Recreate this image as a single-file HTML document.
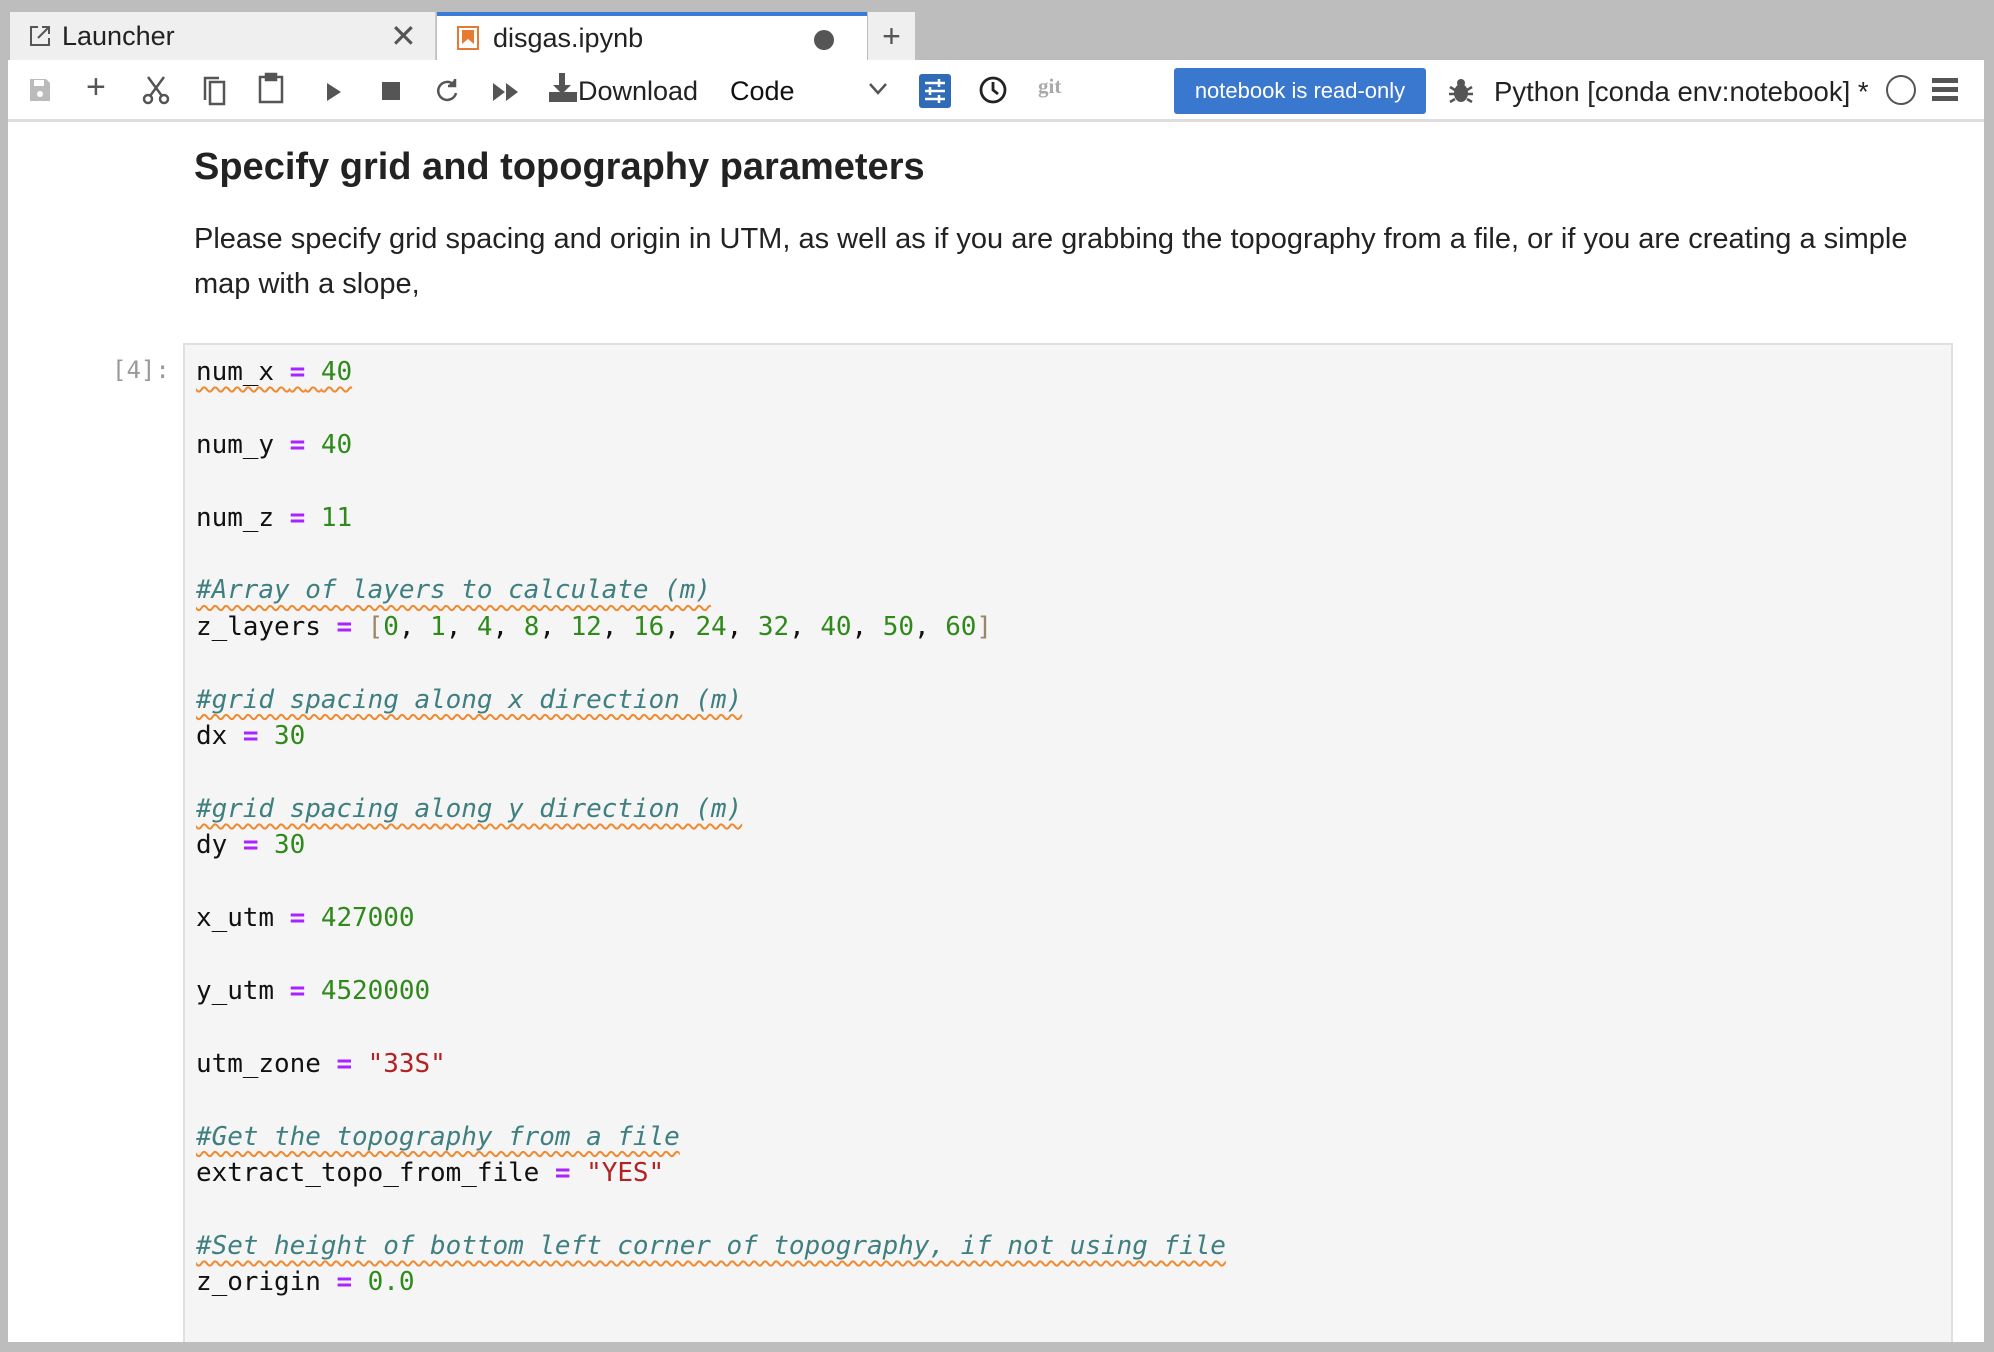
<!DOCTYPE html>
<html style="width:1994px;height:1352px;overflow:hidden"><head><meta charset="utf-8"><style>
*{margin:0;padding:0;box-sizing:border-box}
body{width:1994px;height:1352px;background:#bdbdbd;position:relative;overflow:hidden;font-family:"Liberation Sans",sans-serif;color:#222}
.tab{position:absolute;top:12px;height:48px;font-size:27px;display:flex;align-items:center}
#t1{left:10px;width:426px;background:#efefef;border-right:1px solid #ccc}
#t2{left:437px;width:430px;background:#fff;border-top:4px solid #3a7bd5}
#t3{left:868px;width:47px;background:#efefef;justify-content:center;font-size:32px;color:#555}
#win{position:absolute;left:8px;top:60px;width:1976px;height:1282px;background:#fff;overflow:hidden}
#tb{position:absolute;left:0;top:0;width:100%;height:62px;border-bottom:3px solid #ddd}
.ic{position:absolute;top:14px}
h2{position:absolute;left:186px;top:86px;font-size:38px;font-weight:bold;white-space:nowrap;color:#222}
p.t{position:absolute;left:186px;font-size:29px;white-space:nowrap;color:#222}
#cell{position:absolute;left:175px;top:283px;width:1770px;height:999px;background:#f5f5f5;border:2px solid #e0e0e0;border-bottom:none}
#prm{position:absolute;left:104px;top:296px;font-family:"DejaVu Sans Mono",monospace;font-size:24px;color:#999}
pre{position:absolute;left:188px;top:294px;font-family:"DejaVu Sans Mono",monospace;font-size:26px;line-height:36.4px;color:#111;letter-spacing:-0.05px}
.o{color:#aa22ff;font-weight:bold}.n{color:#2f8a1b}.s{color:#b22222}.c{color:#3f7f7f;font-style:italic}.b{color:#998866}
.w{text-decoration:underline wavy #f08a30;text-decoration-thickness:1.5px;text-underline-offset:6px}
</style></head><body>
<div class="tab" id="t1">
<svg style="margin-left:18px" width="24" height="24" viewBox="0 0 24 24" fill="none" stroke="#555" stroke-width="2"><path d="M10 3H3v18h18v-7M14 3h7v7M21 3L10 14"/></svg>
<span style="margin-left:10px">Launcher</span>
<span style="position:absolute;left:380px;font-size:32px;color:#555">✕</span></div>
<div class="tab" id="t2">
<svg style="margin-left:20px" width="22" height="24" viewBox="0 0 22 24"><rect x="1" y="1" width="20" height="22" fill="none" stroke="#e67a30" stroke-width="2"/><path d="M5 4h12v14l-6-5-6 5z" fill="#e67a30"/></svg>
<span style="margin-left:14px">disgas.ipynb</span>
<span style="position:absolute;left:377px;top:14px;width:20px;height:20px;border-radius:50%;background:#555"></span></div>
<div class="tab" id="t3">+</div>
<div id="win">
<div id="tb">
<svg class="ic" style="left:20px;top:17px" width="24" height="26" viewBox="0 0 24 26"><path d="M2 2h16l4 4v18H2z" fill="#bbb"/><rect x="6" y="3" width="10" height="6" fill="#fff"/><circle cx="12" cy="17" r="3" fill="#fff"/></svg>
<div class="ic" style="left:78px;top:8px;font-size:34px;color:#555">+</div>
<svg class="ic" style="left:134px;top:15px" width="28" height="30" viewBox="0 0 28 30" fill="none" stroke="#555" stroke-width="2.5"><circle cx="6" cy="24" r="4"/><circle cx="22" cy="24" r="4"/><path d="M8 21L22 2M20 21L6 2"/></svg>
<svg class="ic" style="left:193px;top:14px" width="26" height="32" viewBox="0 0 26 32" fill="none" stroke="#555" stroke-width="2.5"><path d="M4 26V4h14"/><rect x="9" y="8" width="14" height="22"/></svg>
<svg class="ic" style="left:250px;top:12px" width="26" height="32" viewBox="0 0 26 32" fill="none" stroke="#555" stroke-width="2.5"><rect x="2" y="5" width="22" height="25"/><rect x="8" y="2" width="10" height="6" fill="#555"/></svg>
<svg class="ic" style="left:318px;top:22px" width="16" height="20" viewBox="0 0 16 20"><path d="M1 1l14 9-14 9z" fill="#555"/></svg>
<div class="ic" style="left:374px;top:22px;width:18px;height:18px;background:#555"></div>
<svg class="ic" style="left:427px;top:17px" width="26" height="28" viewBox="0 0 26 28" fill="none" stroke="#555" stroke-width="2.5"><path d="M21 16a9 9 0 1 1-3-9"/><path d="M20 2v7h-7" fill="#555"/></svg>
<svg class="ic" style="left:484px;top:22px" width="28" height="20" viewBox="0 0 28 20"><path d="M1 1l12 9-12 9zM14 1l12 9-12 9z" fill="#555"/></svg>
<svg class="ic" style="left:540px;top:12px" width="30" height="32" viewBox="0 0 30 32"><path d="M11 1h6v12h6l-9 9-9-9h6z" fill="#555"/><path d="M1 20v10h28V20" fill="#555"/></svg>
<div class="ic" style="left:570px;top:16px;font-size:27px;color:#222">Download</div>
<div class="ic" style="left:722px;top:16px;font-size:27px;color:#111">Code</div>
<svg class="ic" style="left:860px;top:22px" width="20" height="14" viewBox="0 0 20 14" fill="none" stroke="#555" stroke-width="2.5"><path d="M2 2l8 9 8-9"/></svg>
<div class="ic" style="left:911px;top:14px;width:32px;height:34px;background:#2f6bb7;border-radius:3px"><svg width="32" height="34" viewBox="0 0 32 34" stroke="#fff" stroke-width="2.5"><path d="M6 9h20M6 17h20M6 25h20"/><path d="M20 5v8M11 13v8M20 21v8"/></svg></div>
<svg class="ic" style="left:970px;top:15px" width="30" height="30" viewBox="0 0 30 30" fill="none" stroke="#222" stroke-width="2.8"><circle cx="15" cy="15" r="12"/><path d="M15 7v8l5 4"/></svg>
<div class="ic" style="left:1030px;top:14px;font-size:21px;color:#aaa;font-weight:bold;font-family:'Liberation Serif',serif">git</div>
<div class="ic" style="left:1166px;top:8px;width:252px;height:46px;background:#3a77cf;border-radius:3px;color:#fff;font-size:22px;display:flex;align-items:center;justify-content:center">notebook is read-only</div>
<svg class="ic" style="left:1440px;top:17px" width="26" height="28" viewBox="0 0 26 28"><ellipse cx="13" cy="16" rx="7" ry="9" fill="#555"/><circle cx="13" cy="6" r="4" fill="#555"/><path d="M2 10l5 3M24 10l-5 3M1 17h6M25 17h-6M2 25l5-3M24 25l-5-3" stroke="#555" stroke-width="2.5"/></svg>
<div class="ic" style="left:1486px;top:16px;font-size:27.5px;color:#222">Python [conda env:notebook] *</div>
<div class="ic" style="left:1878px;top:15px;width:30px;height:30px;border:2.5px solid #555;border-radius:50%"></div>
<svg class="ic" style="left:1924px;top:18px" width="26" height="24" viewBox="0 0 26 24" fill="#555"><rect y="0" width="26" height="5"/><rect y="9" width="26" height="5"/><rect y="18" width="26" height="5"/></svg>
</div>
<h2>Specify grid and topography parameters</h2>
<p class="t" style="top:163px">Please specify grid spacing and origin in UTM, as well as if you are grabbing the topography from a file, or if you are creating a simple</p>
<p class="t" style="top:208px">map with a slope,</p>
<div id="cell"></div>
<div id="prm">[4]:</div>
<pre><span class="w">num_x <span class="o">=</span> <span class="n">40</span></span>

num_y <span class="o">=</span> <span class="n">40</span>

num_z <span class="o">=</span> <span class="n">11</span>

<span class="c w">#Array of layers to calculate (m)</span>
z_layers <span class="o">=</span> <span class="b">[</span><span class="n">0</span>, <span class="n">1</span>, <span class="n">4</span>, <span class="n">8</span>, <span class="n">12</span>, <span class="n">16</span>, <span class="n">24</span>, <span class="n">32</span>, <span class="n">40</span>, <span class="n">50</span>, <span class="n">60</span><span class="b">]</span>

<span class="c w">#grid spacing along x direction (m)</span>
dx <span class="o">=</span> <span class="n">30</span>

<span class="c w">#grid spacing along y direction (m)</span>
dy <span class="o">=</span> <span class="n">30</span>

x_utm <span class="o">=</span> <span class="n">427000</span>

y_utm <span class="o">=</span> <span class="n">4520000</span>

utm_zone <span class="o">=</span> <span class="s">"33S"</span>

<span class="c w">#Get the topography from a file</span>
extract_topo_from_file <span class="o">=</span> <span class="s">"YES"</span>

<span class="c w">#Set height of bottom left corner of topography, if not using file</span>
z_origin <span class="o">=</span> <span class="n">0.0</span></pre>
</div>
</body></html>
